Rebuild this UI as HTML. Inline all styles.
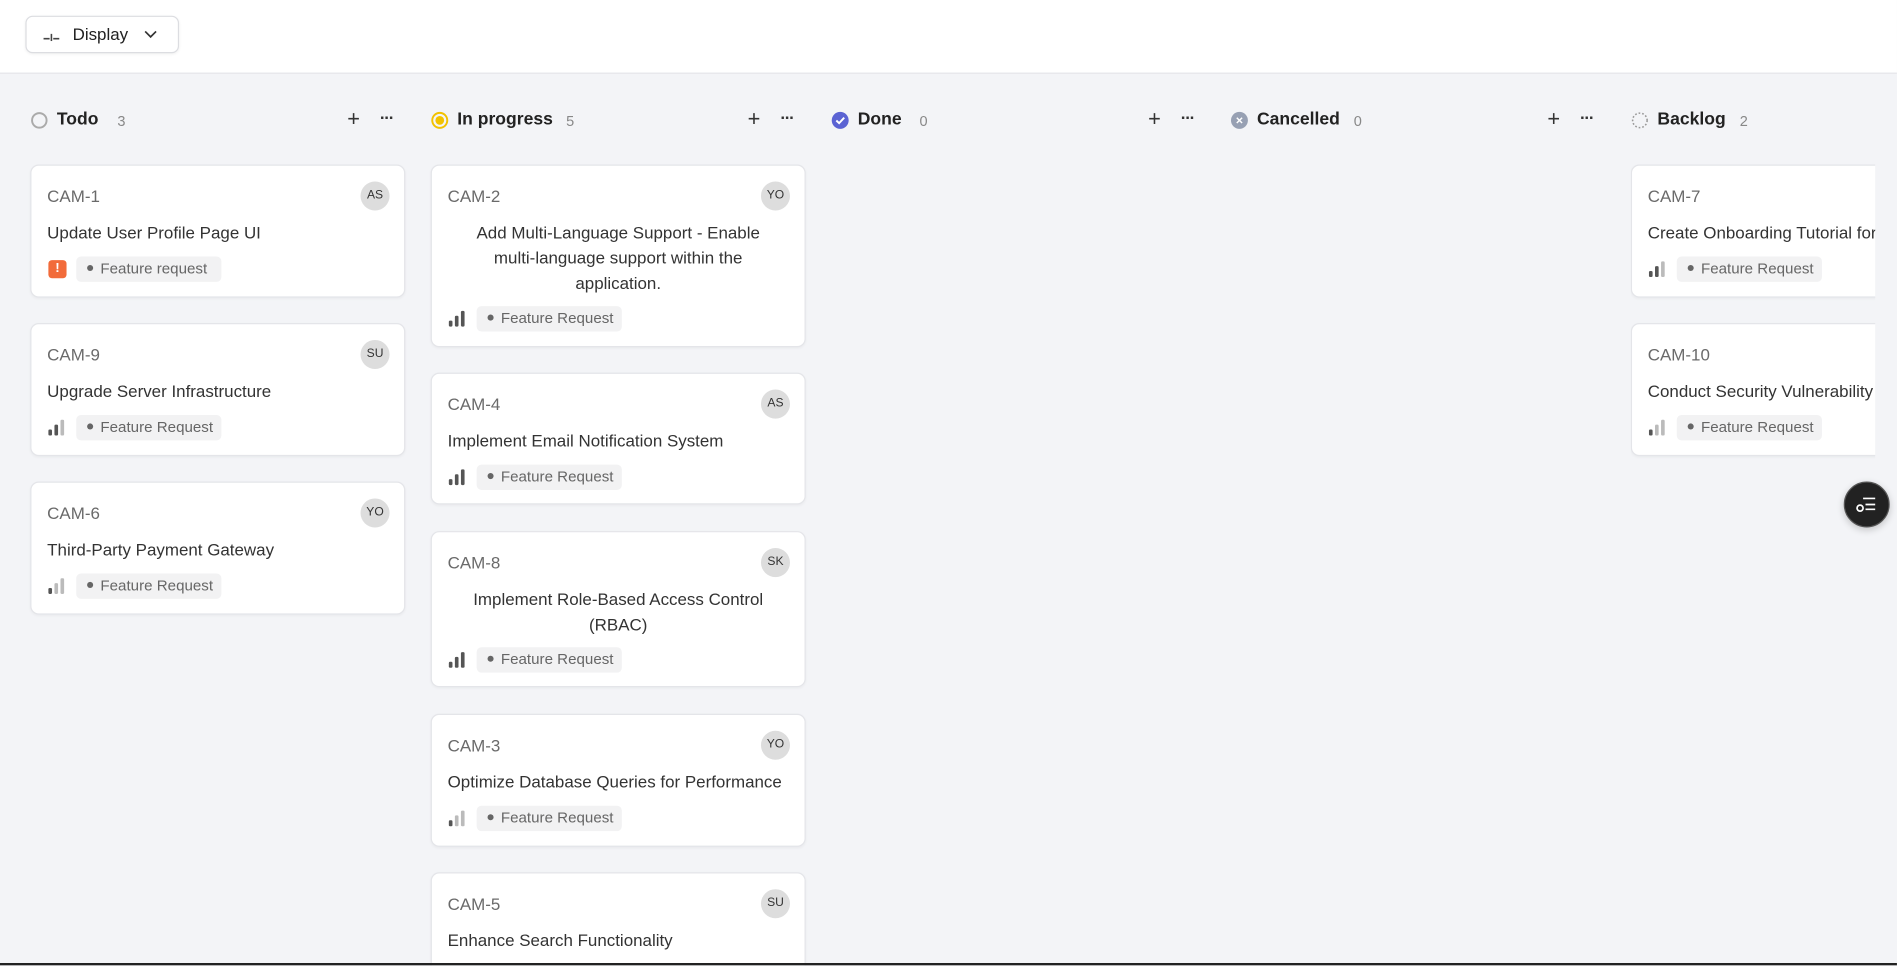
<!DOCTYPE html>
<html><head><style>
html,body{margin:0;padding:0;width:1897px;height:966px;overflow:hidden;background:#f3f4f7;}
#w{position:absolute;left:0;top:0;width:1568px;height:798px;transform:scale(1.2098);transform-origin:0 0;font-family:"Liberation Sans",sans-serif;background:#f3f4f7;overflow:hidden;}
.hdr{position:absolute;left:0;top:0;width:1568px;height:60px;background:#fff;border-bottom:1px solid #e3e4e8;}
.btn{position:absolute;left:21px;top:13px;width:125px;height:29px;border:1px solid #dcdde1;border-radius:6px;background:#fff;box-shadow:0 1px 2px rgba(0,0,0,.05);}
.btn span{position:absolute;left:38px;top:6px;font-size:14px;color:#222;}
.col{position:absolute;top:0;width:310px;}
.ch{position:absolute;top:91px;height:20px;left:0;width:310px;}
.ch .t{position:absolute;left:22px;top:0px;font-size:14.5px;font-weight:bold;color:#222;}
.ch .n{position:absolute;top:2px;font-size:12px;color:#888;}
.ch .p{position:absolute;left:262px;top:-3px;font-size:18px;color:#333;}
.ch .d{position:absolute;left:289px;top:-2px;font-size:14px;color:#333;letter-spacing:-1px;font-weight:bold;}
.card{position:absolute;left:0;width:308px;background:#fff;border:1px solid #e4e5e9;border-radius:7px;box-shadow:0 1px 2px rgba(0,0,0,.04);}
.id{position:absolute;left:13px;top:17px;font-size:14px;color:#6a6a6a;}
.av{position:absolute;right:12px;top:13px;width:24px;height:24px;border-radius:50%;background:#ddd;font-size:10px;color:#333;text-align:center;line-height:24px;}
.ti{position:absolute;left:13px;right:13px;top:45px;font-size:14px;color:#333;line-height:21px;}
.ti.c{text-align:center;left:24px;right:24px;}
.tg{position:absolute;left:37px;height:21px;width:120px;background:#f2f2f3;border-radius:4px;font-size:12.5px;color:#666;line-height:21px;}
.tg:before{content:"";display:inline-block;width:5px;height:5px;border-radius:50%;background:#666;margin:0 6px 2px 9px;vertical-align:middle;}
.pr{position:absolute;left:14px;width:16px;height:13px;}
.pr i{position:absolute;bottom:0;width:3px;border-radius:1px;background:#555;}
.pr i:nth-child(1){left:0;height:5px}.pr i:nth-child(2){left:5px;height:9px}.pr i:nth-child(3){left:10px;height:13px}
.pr.m i:nth-child(3){background:#bbb}
.pr.l i:nth-child(2),.pr.l i:nth-child(3){background:#bbb}
.urg{position:absolute;left:14px;width:15px;height:15px;border-radius:3px;background:#f26b3a;color:#fff;font-size:11px;font-weight:bold;text-align:center;line-height:15px;}
</style></head><body><div id="w">
<div class="hdr"><div class="btn">
<svg style="position:absolute;left:13px;top:12px" width="16" height="8" viewBox="0 0 16 8"><path d="M1 6H6M9 6H14M7.5 2V8" stroke="#444" stroke-width="1.3"/></svg>
<span>Display</span>
<svg style="position:absolute;left:97px;top:10px" width="11" height="8" viewBox="0 0 11 8"><path d="M1 2L5.5 6.5L10 2" stroke="#333" stroke-width="1.4" fill="none"/></svg>
</div></div>

<div class="col" style="left:25px">
<div class="ch"><svg style="position:absolute;left:0;top:1px" width="15" height="15"><circle cx="7.5" cy="7.5" r="6" fill="none" stroke="#aaa" stroke-width="1.6"/></svg><span class="t">Todo</span><span class="n" style="left:72px">3</span><span class="p">+</span><span class="d">···</span></div>
<div class="card" style="top:136px;height:108px"><div class="id">CAM-1</div><div class="av">AS</div><div class="ti">Update User Profile Page UI</div><div class="urg" style="top:78px">!</div><div class="tg" style="top:75px">Feature request</div></div>
<div class="card" style="top:267px;height:108px"><div class="id">CAM-9</div><div class="av">SU</div><div class="ti">Upgrade Server Infrastructure</div><div class="pr m" style="top:79px"><i></i><i></i><i></i></div><div class="tg" style="top:75px">Feature Request</div></div>
<div class="card" style="top:398px;height:108px"><div class="id">CAM-6</div><div class="av">YO</div><div class="ti">Third-Party Payment Gateway</div><div class="pr l" style="top:79px"><i></i><i></i><i></i></div><div class="tg" style="top:75px">Feature Request</div></div>
</div>

<div class="col" style="left:356px">
<div class="ch"><svg style="position:absolute;left:0;top:1px" width="15" height="15"><circle cx="7.5" cy="7.5" r="6.2" fill="none" stroke="#f2c200" stroke-width="1.6"/><circle cx="7.5" cy="7.5" r="3.6" fill="#f2c200"/></svg><span class="t">In progress</span><span class="n" style="left:112px">5</span><span class="p">+</span><span class="d">···</span></div>
<div class="card" style="top:136px;height:149px"><div class="id">CAM-2</div><div class="av">YO</div><div class="ti c">Add Multi-Language Support - Enable multi-language support within the application.</div><div class="pr" style="top:120px"><i></i><i></i><i></i></div><div class="tg" style="top:116px">Feature Request</div></div>
<div class="card" style="top:308px;height:107px"><div class="id">CAM-4</div><div class="av">AS</div><div class="ti">Implement Email Notification System</div><div class="pr" style="top:79px"><i></i><i></i><i></i></div><div class="tg" style="top:75px">Feature Request</div></div>
<div class="card" style="top:439px;height:127px"><div class="id">CAM-8</div><div class="av">SK</div><div class="ti c">Implement Role-Based Access Control (RBAC)</div><div class="pr" style="top:99px"><i></i><i></i><i></i></div><div class="tg" style="top:95px">Feature Request</div></div>
<div class="card" style="top:590px;height:108px"><div class="id">CAM-3</div><div class="av">YO</div><div class="ti">Optimize Database Queries for Performance</div><div class="pr l" style="top:79px"><i></i><i></i><i></i></div><div class="tg" style="top:75px">Feature Request</div></div>
<div class="card" style="top:721px;height:108px"><div class="id">CAM-5</div><div class="av">SU</div><div class="ti">Enhance Search Functionality</div></div>
</div>

<div class="col" style="left:687px">
<div class="ch"><svg style="position:absolute;left:0;top:1px" width="15" height="15"><circle cx="7.5" cy="7.5" r="7" fill="#5b63d3"/><path d="M4.3 7.6L6.6 9.8L10.8 5.3" stroke="#fff" stroke-width="1.6" fill="none"/></svg><span class="t">Done</span><span class="n" style="left:73px">0</span><span class="p">+</span><span class="d">···</span></div>
</div>

<div class="col" style="left:1017px">
<div class="ch"><svg style="position:absolute;left:0;top:1px" width="15" height="15"><circle cx="7.5" cy="7.5" r="7" fill="#97a0b3"/><path d="M5.3 5.3L9.7 9.7M9.7 5.3L5.3 9.7" stroke="#fff" stroke-width="1.2"/></svg><span class="t">Cancelled</span><span class="n" style="left:102px">0</span><span class="p">+</span><span class="d">···</span></div>
</div>

<div style="position:absolute;left:1348px;top:0;width:202px;height:798px;overflow:hidden">
<div class="col" style="left:0">
<div class="ch"><svg style="position:absolute;left:0;top:1px" width="15" height="15"><circle cx="7.5" cy="7.5" r="6" fill="none" stroke="#999" stroke-width="1.3" stroke-dasharray="1.4 1.6"/></svg><span class="t">Backlog</span><span class="n" style="left:90px">2</span></div>
<div class="card" style="top:136px;height:108px"><div class="id">CAM-7</div><div class="ti" style="white-space:nowrap">Create Onboarding Tutorial for New Users</div><div class="pr m" style="top:79px"><i></i><i></i><i></i></div><div class="tg" style="top:75px">Feature Request</div></div>
<div class="card" style="top:267px;height:108px"><div class="id">CAM-10</div><div class="ti" style="white-space:nowrap">Conduct Security Vulnerability Assessment</div><div class="pr l" style="top:79px"><i></i><i></i><i></i></div><div class="tg" style="top:75px">Feature Request</div></div>
</div></div>

<div style="position:absolute;left:1524px;top:398px;width:36px;height:36px;border-radius:50%;background:#222;border:1px solid #555;box-shadow:0 2px 6px rgba(0,0,0,.2)">
<svg style="position:absolute;left:9px;top:10px" width="18" height="16" viewBox="0 0 18 16"><path d="M6 3H16M8 8H16M8 12H16" stroke="#fff" stroke-width="1.4"/><circle cx="3.5" cy="11" r="2.5" fill="none" stroke="#fff" stroke-width="1.4"/></svg></div>
<div style="position:absolute;left:0;top:796px;width:1568px;height:2px;background:#222"></div>
</div></body></html>
